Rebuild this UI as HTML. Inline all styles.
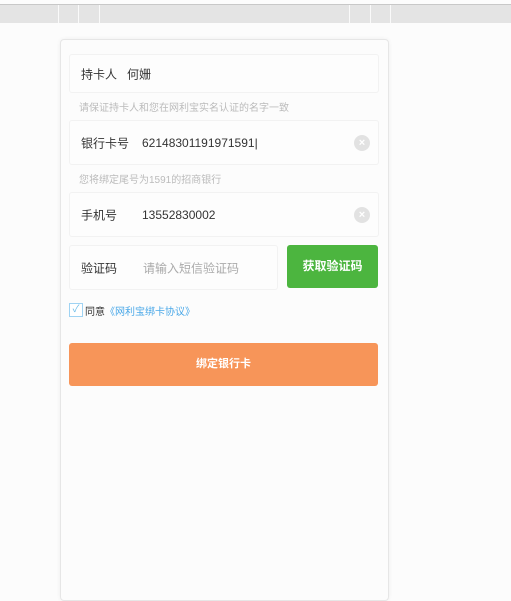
<!DOCTYPE html><html><head><style>
body{margin:0;width:511px;height:581px;background:#fcfcfc;font-family:"Liberation Sans","Noto Sans CJK SC",sans-serif;position:relative;overflow:hidden}
.a{position:absolute}
.top{left:0;top:4px;width:511px;height:18px;background:#e4e4e4;border-top:1px solid #c8c8c8}
.v{top:5px;width:1px;height:18px;background:#fafafa}
.card{left:60px;top:39px;width:327px;height:560px;background:#fcfcfc;border:1px solid #e6e6e6;border-radius:4px;box-shadow:0 0 4px rgba(0,0,0,.06)}
.row{left:69px;width:308px;background:#fdfdfd;border:1px solid #f2f2f2;border-radius:3px;font-size:12px;color:#333}
.row span{position:absolute;top:50%;transform:translateY(-50%);white-space:nowrap}
.hint{left:79px;font-size:10px;color:#bbb}
.x{position:absolute;right:8px;top:50%;margin-top:-8px;width:16px;height:16px;border-radius:50%;background:#e2e2e2;color:#fff;font-size:11px;line-height:16px;text-align:center;font-weight:bold}
</style></head><body>
<div class="a top"></div>
<div class="a v" style="left:58px"></div><div class="a v" style="left:78px"></div><div class="a v" style="left:99px"></div>
<div class="a v" style="left:349px"></div><div class="a v" style="left:370px"></div><div class="a v" style="left:390px"></div>
<div class="a card"></div>
<div class="a row" style="top:54px;height:37px"><span style="left:11px">持卡人&nbsp;&nbsp;&nbsp;何姗</span></div>
<div class="a hint" style="top:99px">请保证持卡人和您在网利宝实名认证的名字一致</div>
<div class="a row" style="top:120px;height:43px"><span style="left:11px">银行卡号</span><span style="left:72px">62148301191971591|</span><div class="x">×</div></div>
<div class="a hint" style="top:171px">您将绑定尾号为1591的招商银行</div>
<div class="a row" style="top:192px;height:43px"><span style="left:11px">手机号</span><span style="left:72px">13552830002</span><div class="x">×</div></div>
<div class="a row" style="top:245px;height:43px;width:207px"><span style="left:11px">验证码</span><span style="left:73px;color:#aaa">请输入短信验证码</span></div>
<div class="a" style="left:287px;top:245px;width:91px;height:43px;background:#4cb53f;border-radius:3px;color:#fff;font-size:12px;font-weight:bold;line-height:43px;text-align:center">获取验证码</div>
<div class="a" style="left:69px;top:303px;width:12px;height:12px;border:1px solid #9fd3f3;background:#fff;color:#6bbbe8;font-size:10px;line-height:12px;text-align:center">✓</div>
<div class="a" style="left:85px;top:303px;font-size:10px;color:#333">同意<span style="color:#4aa8e8">《网利宝绑卡协议》</span></div>
<div class="a" style="left:69px;top:343px;width:309px;height:43px;background:#f79559;border-radius:3px;color:#fff;font-size:11px;font-weight:bold;line-height:43px;text-align:center">绑定银行卡</div>
</body></html>
